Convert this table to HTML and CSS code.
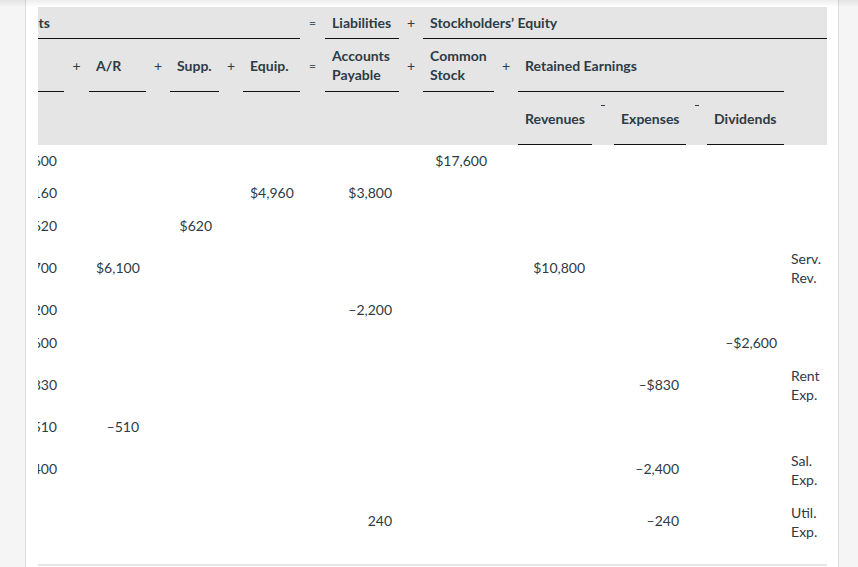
FILE: index.html
```html
<!DOCTYPE html>
<html lang="en">
<head>
<meta charset="utf-8">
<title>Accounting equation</title>
<link rel="stylesheet" href="styles.css">
</head>
<body>
<div class="page">
  <div class="panel">
    <div class="scroller">
      <table class="eq">
        <colgroup>
          <col class="c-cash"><col class="c-op1"><col class="c-ar"><col class="c-op2"><col class="c-supp"><col class="c-op3"><col class="c-equip"><col class="c-op4"><col class="c-ap"><col class="c-op5"><col class="c-cs"><col class="c-op6"><col class="c-rev"><col class="c-op7"><col class="c-exp"><col class="c-op8"><col class="c-div"><col class="c-note">
        </colgroup>
        <thead>
          <tr class="h1">
            <th colspan="7" class="ul assets">Assets</th>
            <th class="op eqs">=</th>
            <th class="ul">Liabilities</th>
            <th class="op">+</th>
            <th colspan="8" class="ul">Stockholders’ Equity</th>
          </tr>
          <tr class="h2">
            <th class="ul">Cash</th>
            <th class="op">+</th>
            <th class="ul">A/R</th>
            <th class="op">+</th>
            <th class="ul">Supp.</th>
            <th class="op">+</th>
            <th class="ul">Equip.</th>
            <th class="op eqs">=</th>
            <th class="ul">Accounts<br>Payable</th>
            <th class="op">+</th>
            <th class="ul">Common<br>Stock</th>
            <th class="op">+</th>
            <th colspan="5" class="ul">Retained Earnings</th>
            <th></th>
          </tr>
          <tr class="h3">
            <th colspan="12" class="blank"></th>
            <th class="ul">Revenues</th>
            <th class="op top"><span class="mn"></span></th>
            <th class="ul">Expenses</th>
            <th class="op top"><span class="mn"></span></th>
            <th class="ul">Dividends</th>
            <th></th>
          </tr>
        </thead>
        <tbody>
          <tr><td class="n">$17,600</td><td></td><td></td><td></td><td></td><td></td><td></td><td></td><td></td><td></td><td class="n">$17,600</td><td></td><td></td><td></td><td></td><td></td><td></td><td></td></tr>
          <tr><td class="n">–1,160</td><td></td><td></td><td></td><td></td><td></td><td class="n">$4,960</td><td></td><td class="n">$3,800</td><td></td><td></td><td></td><td></td><td></td><td></td><td></td><td></td><td></td></tr>
          <tr><td class="n">–620</td><td></td><td></td><td></td><td class="n">$620</td><td></td><td></td><td></td><td></td><td></td><td></td><td></td><td></td><td></td><td></td><td></td><td></td><td></td></tr>
          <tr><td class="n">4,700</td><td></td><td class="n">$6,100</td><td></td><td></td><td></td><td></td><td></td><td></td><td></td><td></td><td></td><td class="n">$10,800</td><td></td><td></td><td></td><td></td><td class="note">Serv.<br>Rev.</td></tr>
          <tr><td class="n">–2,200</td><td></td><td></td><td></td><td></td><td></td><td></td><td></td><td class="n">–2,200</td><td></td><td></td><td></td><td></td><td></td><td></td><td></td><td></td><td></td></tr>
          <tr><td class="n">–2,600</td><td></td><td></td><td></td><td></td><td></td><td></td><td></td><td></td><td></td><td></td><td></td><td></td><td></td><td></td><td></td><td class="n">–$2,600</td><td></td></tr>
          <tr><td class="n">–830</td><td></td><td></td><td></td><td></td><td></td><td></td><td></td><td></td><td></td><td></td><td></td><td></td><td></td><td class="n">–$830</td><td></td><td></td><td class="note">Rent<br>Exp.</td></tr>
          <tr><td class="n">510</td><td></td><td class="n">–510</td><td></td><td></td><td></td><td></td><td></td><td></td><td></td><td></td><td></td><td></td><td></td><td></td><td></td><td></td><td></td></tr>
          <tr><td class="n">–2,400</td><td></td><td></td><td></td><td></td><td></td><td></td><td></td><td></td><td></td><td></td><td></td><td></td><td></td><td class="n">–2,400</td><td></td><td></td><td class="note">Sal.<br>Exp.</td></tr>
          <tr><td></td><td></td><td></td><td></td><td></td><td></td><td></td><td></td><td class="n">240</td><td></td><td></td><td></td><td></td><td></td><td class="n">–240</td><td></td><td></td><td class="note">Util.<br>Exp.</td></tr>
        </tbody>
      </table>
    </div>
  </div>
</div>
</body>
</html>
```

FILE: styles.css
```css
html, body {
  margin: 0;
  padding: 0;
}
body {
  background: #f5f5f5;
  font-family: Lato, "Open Sans", Arial, sans-serif;
  color: #2d3b45;
  font-size: 14px;
  line-height: 19px;
}
.page {
  position: relative;
  height: 567px;
  overflow: hidden;
  padding-left: 25px;
}
.page::before {
  content: "";
  position: absolute;
  left: 0;
  right: 0;
  top: 0;
  height: 7px;
  background: linear-gradient(to bottom, rgba(0,0,0,0.07), rgba(0,0,0,0));
  pointer-events: none;
}
.panel {
  width: 814px;
  height: 567px;
  background: #fff;
  border-left: 1px solid #dcdcdc;
  border-right: 1px solid #dcdcdc;
  padding: 7px 13px 0 12px;
  box-sizing: border-box;
}
.scroller {
  width: 789px;
  overflow: hidden;
  padding-bottom: 16px;
  border-bottom: 2px solid #e6e6e6;
}
.eq {
  margin-left: -40px;
  width: 829px;
  table-layout: fixed;
  border-collapse: collapse;
}
.c-cash { width: 66px; }
.c-op1 { width: 25px; }
.c-ar { width: 57px; }
.c-op2 { width: 24px; }
.c-supp { width: 49px; }
.c-op3 { width: 24px; }
.c-equip { width: 57px; }
.c-op4 { width: 25px; }
.c-ap { width: 74px; }
.c-op5 { width: 24px; }
.c-cs { width: 71px; }
.c-op6 { width: 24px; }
.c-rev { width: 74px; }
.c-op7 { width: 22px; }
.c-exp { width: 72px; }
.c-op8 { width: 21px; }
.c-div { width: 77px; }
.c-note { width: 43px; }

thead th {
  background: #e5e5e5;
  font-weight: 700;
  text-align: left;
  padding: 0 7px;
  vertical-align: middle;
  white-space: nowrap;
}
.h1 th { height: 31px; }
.h2 th { height: 52px; }
.h3 th { height: 52px; }
th.assets { padding-left: 11px; }
th.ul { border-bottom: 1px solid #111; }
th.op {
  font-weight: 400;
  text-align: center;
  padding: 0;
}
th.eqs { font-size: 12px; color: #4a5660; }
th.top { vertical-align: top; }
.mn {
  display: block;
  width: 4px;
  height: 1px;
  background: #2d3b45;
  margin: 13px auto 0;
}
tbody td {
  padding: 7px;
  line-height: 18.5px;
  vertical-align: middle;
  white-space: nowrap;
}
td.n { text-align: right; }
td.note {
  text-align: left;
  line-height: 19px;
  white-space: normal;
}
```
